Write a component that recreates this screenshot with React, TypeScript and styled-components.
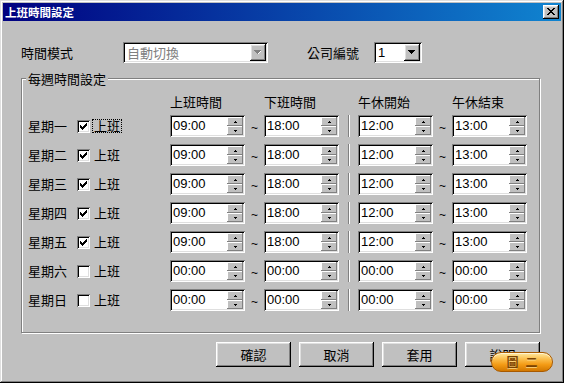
import React from "react";
import styled, { createGlobalStyle } from "styled-components";

const GlobalStyle = createGlobalStyle`
  html, body { margin: 0; padding: 0; background: #c0c0c0; }
  body {
    font-family: "Noto Sans CJK TC", "Liberation Sans", sans-serif;
    font-size: 13px;
    color: #000;
  }
  * { box-sizing: border-box; }
`;

const raised = `
  box-shadow: inset -1px -1px #000, inset 1px 1px #fff,
    inset -2px -2px #808080, inset 2px 2px #dfdfdf;
`;

const sunken = `
  box-shadow: inset 1px 1px #808080, inset -1px -1px #fff,
    inset 2px 2px #000, inset -2px -2px #dfdfdf;
`;

const Window = styled.div`
  position: relative;
  width: 564px;
  height: 383px;
  padding: 3px;
  background: #c0c0c0;
  display: flex;
  flex-direction: column;
  box-shadow: inset -1px -1px #000, inset 1px 1px #dfdfdf,
    inset -2px -2px #808080, inset 2px 2px #fff;
`;

const TitleBar = styled.div`
  height: 18px;
  display: flex;
  align-items: center;
  justify-content: space-between;
  padding: 0 2px 0 2px;
  background: linear-gradient(to right, #000080, #1084d0);
  color: #fff;
  font-size: 11.5px;
  font-weight: 700;
  line-height: 18px;
`;

const CloseButton = styled.div`
  width: 16px;
  height: 14px;
  background: #c0c0c0;
  display: flex;
  align-items: center;
  justify-content: center;
  padding-bottom: 1px;
  ${raised}
`;

const Body = styled.div`
  flex: 1;
  padding: 21px 0 0 18px;
  display: flex;
  flex-direction: column;
`;

const TopRow = styled.div`
  display: flex;
  align-items: center;
  height: 21px;
`;

const FieldLabel = styled.div<{ $w: number; $ml?: number }>`
  width: ${(p) => p.$w}px;
  margin-left: ${(p) => p.$ml ?? 0}px;
  line-height: 21px;
`;

const Select = styled.div<{ $w: number }>`
  width: ${(p) => p.$w}px;
  height: 21px;
  padding: 2px;
  background: #fff;
  display: flex;
  ${sunken}
`;

const SelectValue = styled.div<{ $disabled?: boolean }>`
  flex: 1;
  padding-left: 2px;
  line-height: 17px;
  color: ${(p) => (p.$disabled ? "#808080" : "#000")};
  font-family: ${(p) =>
    p.$disabled ? `"Noto Sans CJK TC", sans-serif` : `"Liberation Sans", sans-serif`};
`;

const ArrowButton = styled.div`
  width: 16px;
  height: 17px;
  background: #c0c0c0;
  display: flex;
  align-items: center;
  justify-content: center;
  ${raised}
`;

const GroupBox = styled.div`
  position: relative;
  margin-top: 15px;
  width: 519px;
  height: 255px;
  border: 1px solid #808080;
  box-shadow: inset 1px 1px #fff, 1px 1px #fff;
  padding: 16px 0 0 6px;
`;

const Legend = styled.div`
  position: absolute;
  top: -8px;
  left: 4px;
  padding: 0 2px;
  line-height: 16px;
  background: #c0c0c0;
`;

const columns = "49px 93px 75px 19px 75px 19px 75px 19px 75px";

const HeaderRow = styled.div`
  display: grid;
  grid-template-columns: ${columns};
  height: 14px;
  line-height: 14px;
  margin-bottom: 6px;
`;

const HeaderCell = styled.div<{ $col: number }>`
  grid-column: ${(p) => p.$col};
`;

const Rows = styled.div`
  display: flex;
  flex-direction: column;
  gap: 7px;
`;

const DayRow = styled.div`
  display: grid;
  grid-template-columns: ${columns};
  height: 22px;
  align-items: center;
`;

const DayLabel = styled.div`
  line-height: 22px;
`;

const CheckWrap = styled.div`
  display: flex;
  align-items: center;
  gap: 2px;
`;

const CheckBox = styled.div`
  width: 13px;
  height: 13px;
  background: #fff;
  padding: 3px;
  ${sunken}
`;

const CheckText = styled.span<{ $focus?: boolean }>`
  border: 1px dotted ${(p) => (p.$focus ? "#000" : "transparent")};
  padding: 0 1px;
  line-height: 12px;
`;

const TimeField = styled.div`
  width: 75px;
  height: 22px;
  padding: 2px;
  background: #fff;
  display: flex;
  ${sunken}
`;

const TimeText = styled.div`
  flex: 1;
  padding-left: 1px;
  line-height: 18px;
  font-family: "Liberation Sans", sans-serif;
  font-size: 13px;
`;

const Spinner = styled.div`
  width: 16px;
  display: flex;
  flex-direction: column;
`;

const SpinButton = styled.div`
  height: 9px;
  background: #c0c0c0;
  display: flex;
  align-items: center;
  justify-content: center;
  box-shadow: inset -1px -1px #808080, inset 1px 1px #fff;
`;

const Tilde = styled.div`
  text-align: center;
  font-family: "Liberation Sans", sans-serif;
  font-size: 12px;
  padding-top: 3px;
`;

const Separator = styled.div`
  justify-self: center;
  width: 2px;
  height: 22px;
  border-left: 1px solid #808080;
  border-right: 1px solid #fff;
`;

const ButtonRow = styled.div`
  width: 519px;
  margin-top: 9px;
  display: flex;
  justify-content: flex-end;
  gap: 8px;
`;

const PushButton = styled.div`
  width: 75px;
  height: 25px;
  background: #c0c0c0;
  display: flex;
  align-items: center;
  justify-content: center;
  ${raised}
`;

const Badge = styled.div`
  position: absolute;
  left: 491px;
  top: 352px;
  width: 62px;
  height: 20px;
  border-radius: 10px;
  border: 1px solid #a85a00;
  background: linear-gradient(to bottom, #ffe9a0 0%, #fbbd4a 35%, #f39a14 65%, #d27800 100%);
  box-shadow: inset 0 1px 0 rgba(255, 255, 255, 0.6);
  display: flex;
  align-items: center;
  justify-content: center;
  gap: 7px;
  color: #7a4200;
  font-size: 12px;
  font-weight: 700;
  line-height: 18px;
  text-shadow: 0 1px 0 rgba(255, 230, 160, 0.7);
`;

const Arrow = ({ color = "#000", shadow = false }: { color?: string; shadow?: boolean }) => (
  <svg width="8" height="5" viewBox="0 0 8 5" shapeRendering="crispEdges">
    {shadow && <path d="M2 1h5v1H6v1H5v1H4v-1H3V2H2z" fill="#fff" />}
    <path d="M0 0h7v1H6v1H5v1H4v1H3V3H2V2H1V1H0z" fill={color} />
  </svg>
);

const SpinArrow = ({ up }: { up?: boolean }) => (
  <svg width="3" height="2" viewBox="0 0 3 2" shapeRendering="crispEdges">
    {up ? (
      <path d="M1 0h1v1h1v1H0V1h1z" fill="#000" />
    ) : (
      <path d="M0 0h3v1H2v1H1V1H0z" fill="#000" />
    )}
  </svg>
);

const Check = () => (
  <svg width="7" height="7" viewBox="0 0 7 7" shapeRendering="crispEdges" style={{ display: "block" }}>
    {[2, 3, 4, 3, 2, 1, 0].map((y, x) => (
      <rect key={x} x={x} y={y} width="1" height="3" fill="#000" />
    ))}
  </svg>
);

const Time = ({ value }: { value: string }) => (
  <TimeField>
    <TimeText>{value}</TimeText>
    <Spinner>
      <SpinButton>
        <SpinArrow up />
      </SpinButton>
      <SpinButton>
        <SpinArrow />
      </SpinButton>
    </Spinner>
  </TimeField>
);

const days = [
  { name: "星期一", on: true },
  { name: "星期二", on: true },
  { name: "星期三", on: true },
  { name: "星期四", on: true },
  { name: "星期五", on: true },
  { name: "星期六", on: false },
  { name: "星期日", on: false },
];

export default function App() {
  return (
    <>
      <GlobalStyle />
      <Window>
        <TitleBar>
          <span>上班時間設定</span>
          <CloseButton>
            <svg width="8" height="7" viewBox="0 0 8 7" shapeRendering="crispEdges">
              <path d="M0 0h2v1h1v1h2V1h1V0h2v1H7v1H6v1H5v1h1v1h1v1h1v1H6V6H5V5H3v1H2v1H0V6h1V5h1V4h1V3H2V2H1V1H0z" fill="#000" />
            </svg>
          </CloseButton>
        </TitleBar>
        <Body>
          <TopRow>
            <FieldLabel $w={102}>時間模式</FieldLabel>
            <Select $w={145}>
              <SelectValue $disabled>自動切換</SelectValue>
              <ArrowButton>
                <Arrow color="#808080" shadow />
              </ArrowButton>
            </Select>
            <FieldLabel $w={67} $ml={39}>公司編號</FieldLabel>
            <Select $w={48}>
              <SelectValue>1</SelectValue>
              <ArrowButton>
                <Arrow />
              </ArrowButton>
            </Select>
          </TopRow>

          <GroupBox>
            <Legend>每週時間設定</Legend>
            <HeaderRow>
              <HeaderCell $col={3}>上班時間</HeaderCell>
              <HeaderCell $col={5}>下班時間</HeaderCell>
              <HeaderCell $col={7}>午休開始</HeaderCell>
              <HeaderCell $col={9}>午休結束</HeaderCell>
            </HeaderRow>
            <Rows>
              {days.map((d, i) => (
                <DayRow key={d.name}>
                  <DayLabel>{d.name}</DayLabel>
                  <CheckWrap>
                    <CheckBox>{d.on && <Check />}</CheckBox>
                    <CheckText $focus={i === 0}>上班</CheckText>
                  </CheckWrap>
                  <Time value={d.on ? "09:00" : "00:00"} />
                  <Tilde>~</Tilde>
                  <Time value={d.on ? "18:00" : "00:00"} />
                  <Separator />
                  <Time value={d.on ? "12:00" : "00:00"} />
                  <Tilde>~</Tilde>
                  <Time value={d.on ? "13:00" : "00:00"} />
                </DayRow>
              ))}
            </Rows>
          </GroupBox>

          <ButtonRow>
            <PushButton>確認</PushButton>
            <PushButton>取消</PushButton>
            <PushButton>套用</PushButton>
            <PushButton>說明</PushButton>
          </ButtonRow>
        </Body>
        <Badge>
          <span>圖</span>
          <span>二</span>
        </Badge>
      </Window>
    </>
  );
}
